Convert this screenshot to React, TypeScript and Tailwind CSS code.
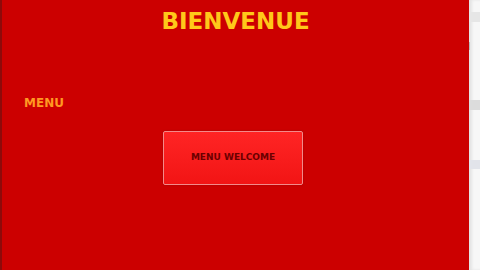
const App = () => {
  return (
    <div className="flex h-[270px] w-[480px] overflow-hidden bg-white font-['DejaVu_Sans',sans-serif]">
      <main className="flex flex-1 flex-col border-l-2 border-[#8e0a0a] bg-[#cc0000]">
        <h1 className="mt-[7px] text-center text-[23px] font-bold leading-[28px] text-[#ffc81a]">
          BIENVENUE
        </h1>
        <p className="ml-[22px] mt-[61px] text-[12px] font-bold leading-[14px] text-[#ff9922]">MENU</p>
        <button className="ml-[161px] mt-[21px] flex h-[54px] w-[140px] items-center justify-center rounded-[2px] border border-[#f38a8a] bg-gradient-to-b from-[#ff2424] to-[#f21414] shadow-[0_0_2px_rgba(120,0,0,0.5)]">
          <span className="text-[9px] font-bold text-[#6b0000]">MENU WELCOME</span>
        </button>
      </main>
      <aside className="flex w-[11px] flex-col bg-[#f7f7f7] shadow-[inset_3px_0_3px_rgba(0,0,0,0.08)]">
        <div className="mt-[12px] h-[10px] bg-[#e6e6e6]" />
        <div className="mt-[20px] h-[8px] border-l border-[#bbb]" />
        <div className="mt-[50px] h-[10px] bg-[#dcdcdc]" />
        <div className="mt-[50px] h-[9px] bg-[#e2e4ea]" />
      </aside>
    </div>
  );
};

export default App;
